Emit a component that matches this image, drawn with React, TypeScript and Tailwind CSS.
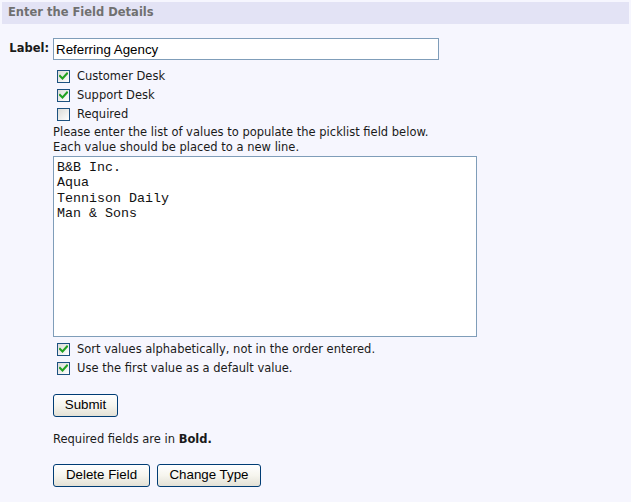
import React from "react";

const verdana = "font-['DejaVu_Sans',Verdana,sans-serif]";
const arial = "font-['Liberation_Sans',Arial,sans-serif]";

function CheckBox({ checked }: { checked: boolean }) {
  return (
    <span className="relative inline-block w-[13px] h-[13px] shrink-0 border border-[#1c5180] bg-gradient-to-br from-[#dcdcd7] to-white">
      {checked && (
        <svg className="absolute left-[1px] top-[1px]" width="9" height="9" viewBox="0 0 9 9">
          <path d="M1 4 L3.5 6.5 L8 1.5" stroke="#21a121" strokeWidth="2" fill="none" strokeLinecap="square" />
        </svg>
      )}
    </span>
  );
}

function CheckRow({ checked, label }: { checked: boolean; label: string }) {
  return (
    <label className="flex items-center h-[19px] pl-[4px] gap-[7px]">
      <CheckBox checked={checked} />
      <span className="text-[11.5px] text-[#1a1a1a] leading-none">{label}</span>
    </label>
  );
}

function XpButton({ children, width }: { children: React.ReactNode; width: string }) {
  return (
    <button
      className={`${width} h-[23px] border border-[#003c74] rounded-[3px] bg-gradient-to-b from-white via-[#f6f5ee] to-[#e3e1d6] text-[13.33px] text-black ${arial}`}
    >
      {children}
    </button>
  );
}

export default function App() {
  return (
    <div className={`w-[631px] h-[502px] bg-[#f6f6fe] pt-[2px] px-[2px] ${verdana}`}>
      <div className="h-[22px] bg-[#e3e3f5] flex items-center px-[6px]">
        <span className="text-[11.5px] font-bold text-[#707070]">Enter the Field Details</span>
      </div>

      <div className="flex items-center mt-[14px] h-[22px]">
        <span className="w-[51px] text-right pr-[4px] text-[11.5px] font-bold text-[#1a1a1a]">Label:</span>
        <input
          defaultValue="Referring Agency"
          className={`w-[386px] h-[22px] border border-[#7f9db9] bg-white px-[2px] text-[13.33px] text-black outline-none ${arial}`}
        />
      </div>

      <div className="pl-[51px]">
        <div className="mt-[7px]">
          <CheckRow checked label="Customer Desk" />
          <CheckRow checked label="Support Desk" />
          <CheckRow checked={false} label="Required" />
        </div>

        <p className="mt-[1px] text-[11.5px] leading-[15px] text-[#1a1a1a]">
          Please enter the list of values to populate the picklist field below.
          <br />
          Each value should be placed to a new line.
        </p>

        <textarea
          defaultValue={"B&B Inc.\nAqua\nTennison Daily\nMan & Sons"}
          className="block mt-[1px] w-[424px] h-[181px] border border-[#7f9db9] bg-white px-[3px] py-[3px] text-[13.33px] leading-[15.3px] text-[#111] resize-none outline-none font-['Liberation_Mono','Courier_New',monospace]"
        />

        <div className="mt-[3px]">
          <CheckRow checked label="Sort values alphabetically, not in the order entered." />
          <CheckRow checked label="Use the first value as a default value." />
        </div>

        <div className="mt-[14px]">
          <XpButton width="w-[65px]">Submit</XpButton>
        </div>

        <p className="mt-[15px] text-[11.5px] text-[#1a1a1a] leading-[15px]">
          Required fields are in <b>Bold.</b>
        </p>

        <div className="mt-[17px] flex gap-[7px]">
          <XpButton width="w-[97px]">Delete Field</XpButton>
          <XpButton width="w-[104px]">Change Type</XpButton>
        </div>
      </div>
    </div>
  );
}
